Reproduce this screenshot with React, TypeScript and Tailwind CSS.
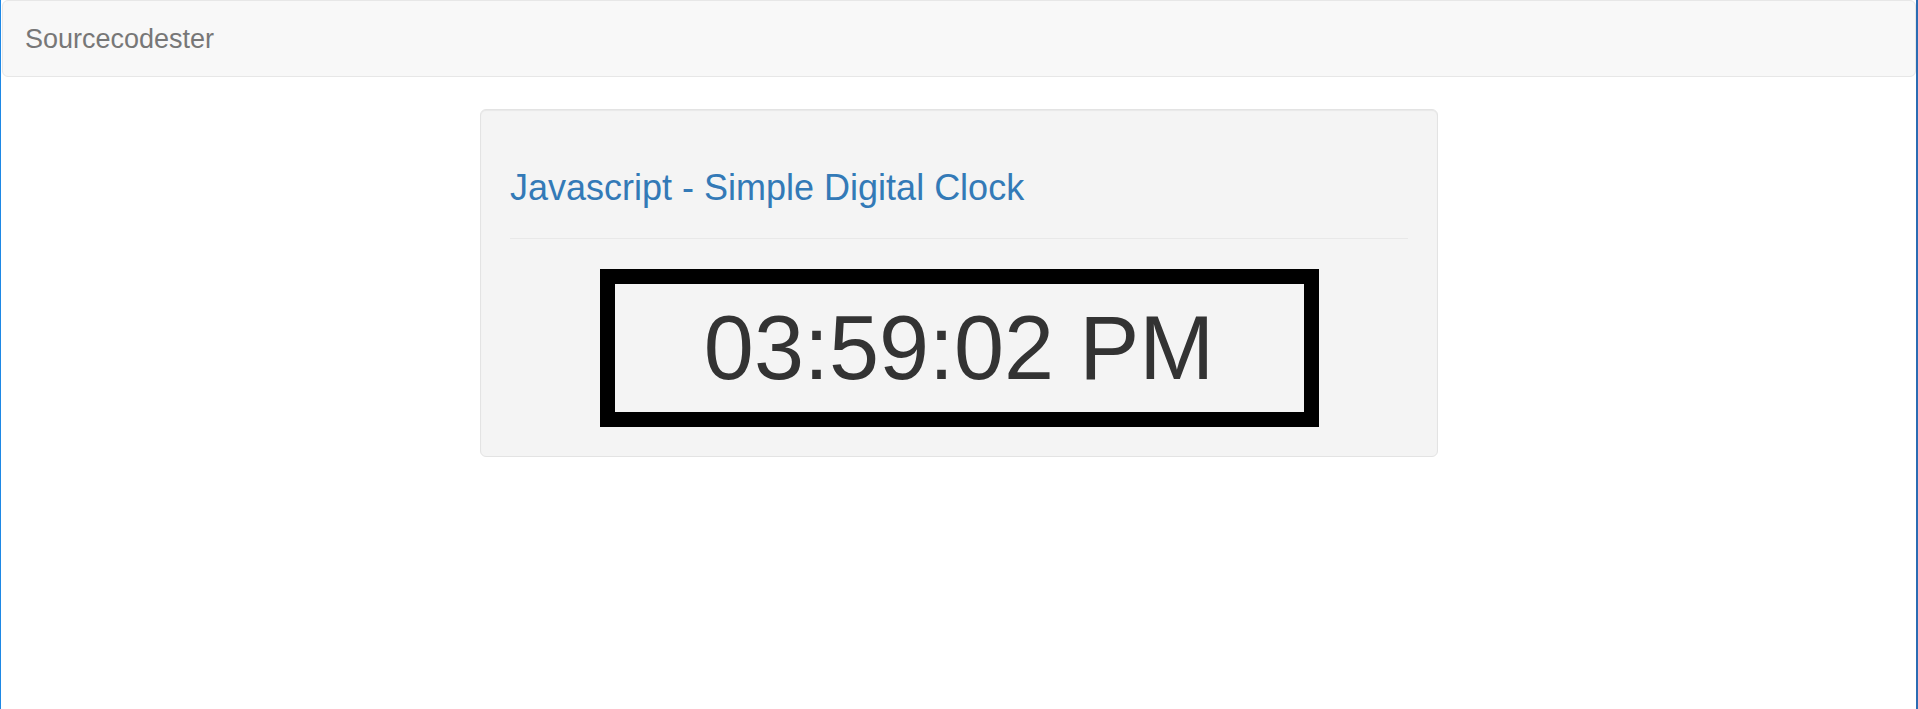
export default function App() {
  return (
    <div
      className="flex min-h-[709px] flex-col border-l border-r-2 border-l-[#1e88e5] border-r-[#2b6cb3] bg-white pl-px"
      style={{ fontFamily: '"Liberation Sans", Arial, sans-serif' }}
    >
      <nav className="flex h-[77px] items-center rounded-[6px] border border-[#e7e7e7] bg-[#f8f8f8] px-[22px]">
        <span className="text-[27px] leading-[30px] text-[#777]">Sourcecodester</span>
      </nav>

      <div className="mx-auto mt-[32px] w-[958px] rounded-[6px] border border-[#e3e3e3] bg-[#f4f4f4] px-[29px] pt-[28px] pb-[29px] shadow-[inset_0_1px_1px_rgba(0,0,0,0.05)]">
        <h3 className="mt-[30px] text-[36px] leading-[40px] text-[#337ab7]">
          Javascript - Simple Digital Clock
        </h3>
        <hr className="mt-[30px] border-t border-[#e8e8e8]" />
        <div className="mt-[30px] flex justify-center">
          <div className="flex h-[158px] w-[719px] items-center justify-center border-[15px] border-black">
            <span className="text-[90px] leading-[100px] text-[#333]">03:59:02 PM</span>
          </div>
        </div>
      </div>
    </div>
  );
}
